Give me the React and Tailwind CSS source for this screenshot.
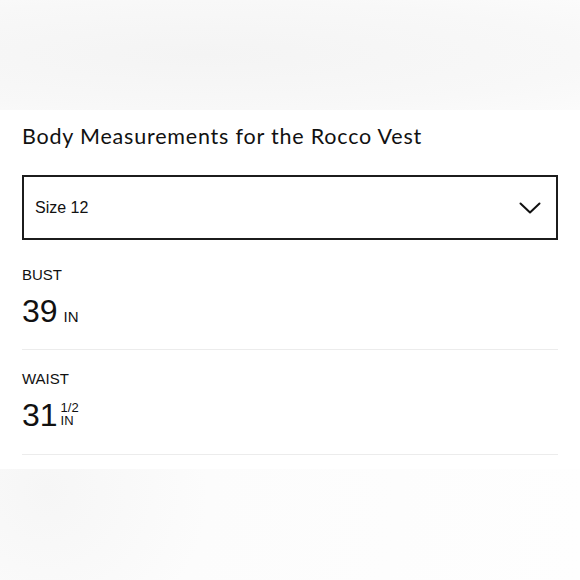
import React from "react";

export default function App() {
  return (
    <div className="w-[580px] h-[580px] flex flex-col bg-[#fcfcfc]">
      <div className="h-[110px] bg-[radial-gradient(ellipse_at_35%_50%,#f4f4f4,#f8f8f8_70%,#fbfbfb)]" />
      <div className="bg-white px-[22px] pb-[14px]">
        <h2 className="pt-[12px] text-[21.5px] leading-[28px] text-[#111] font-['Lato',sans-serif] tracking-[0.8px]">
          Body Measurements for the Rocco Vest
        </h2>
        <div className="mt-[25px] h-[65px] border-2 border-[#1c1c1c] flex items-center justify-between pl-[11px] pr-[15px] font-['Liberation_Sans',Arial,sans-serif]">
          <span className="text-[16px] text-[#111]">Size 12</span>
          <svg width="22" height="12" viewBox="0 0 22 12" fill="none">
            <path d="M1.5 1.5 L11 10.5 L20.5 1.5" stroke="#111" strokeWidth="2" strokeLinecap="round" strokeLinejoin="round" />
          </svg>
        </div>
        <div className="font-['Liberation_Sans',Arial,sans-serif] text-[#111]">
          <div className="pt-[26px] pb-[16px] border-b border-[#ececec]">
            <div className="text-[15px] leading-[18px]">BUST</div>
            <div className="mt-[11px] flex items-baseline leading-[32px]">
              <span className="text-[32px]">39</span>
              <span className="text-[15px] ml-[6px]">IN</span>
            </div>
          </div>
          <div className="pt-[20px] pb-[27px] border-b border-[#ececec]">
            <div className="text-[15px] leading-[18px]">WAIST</div>
            <div className="mt-[14px] flex items-end">
              <span className="text-[32px] leading-[24px]">31</span>
              <span className="ml-[3px] flex flex-col text-[13px] leading-[12px] gap-[1px]">
                <span>1/2</span>
                <span>IN</span>
              </span>
            </div>
          </div>
        </div>
      </div>
      <div className="flex-1 bg-[radial-gradient(circle_at_8%_20%,#f6f6f6,#fcfcfc_30%,#fefefe)]" />
    </div>
  );
}
